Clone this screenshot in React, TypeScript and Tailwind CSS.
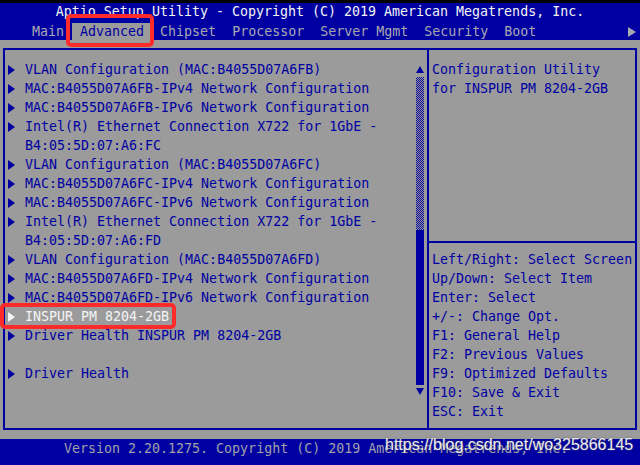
const mono = "font-['DejaVu_Sans_Mono','Liberation_Mono',monospace] text-[13.3px] leading-[19px]";

type Item = { text: string; arrow?: boolean; selected?: boolean };

const items: Item[] = [
  { text: 'VLAN Configuration (MAC:B4055D07A6FB)', arrow: true },
  { text: 'MAC:B4055D07A6FB-IPv4 Network Configuration', arrow: true },
  { text: 'MAC:B4055D07A6FB-IPv6 Network Configuration', arrow: true },
  { text: 'Intel(R) Ethernet Connection X722 for 1GbE -', arrow: true },
  { text: 'B4:05:5D:07:A6:FC' },
  { text: 'VLAN Configuration (MAC:B4055D07A6FC)', arrow: true },
  { text: 'MAC:B4055D07A6FC-IPv4 Network Configuration', arrow: true },
  { text: 'MAC:B4055D07A6FC-IPv6 Network Configuration', arrow: true },
  { text: 'Intel(R) Ethernet Connection X722 for 1GbE -', arrow: true },
  { text: 'B4:05:5D:07:A6:FD' },
  { text: 'VLAN Configuration (MAC:B4055D07A6FD)', arrow: true },
  { text: 'MAC:B4055D07A6FD-IPv4 Network Configuration', arrow: true },
  { text: 'MAC:B4055D07A6FD-IPv6 Network Configuration', arrow: true },
  { text: 'INSPUR PM 8204-2GB', arrow: true, selected: true },
  { text: 'Driver Health INSPUR PM 8204-2GB', arrow: true },
  { text: '' },
  { text: 'Driver Health', arrow: true },
];

const tabs = ['Main', 'Advanced', 'Chipset', 'Processor', 'Server Mgmt', 'Security', 'Boot'];

const help = [
  'Left/Right: Select Screen',
  'Up/Down: Select Item',
  'Enter: Select',
  '+/-: Change Opt.',
  'F1: General Help',
  'F2: Previous Values',
  'F9: Optimized Defaults',
  'F10: Save & Exit',
  'ESC: Exit',
];

const Arrow = ({ white }: { white?: boolean }) => (
  <svg width="7" height="10" viewBox="0 0 7 10" className={white ? 'fill-[#f4f4f4]' : 'fill-[#0000a2]'}>
    <path d="M0 0L7 5L0 10Z" />
  </svg>
);

export default function App() {
  return (
    <div className={`relative flex h-[465px] w-[640px] flex-col overflow-hidden bg-[#9b9b9b] ${mono}`}>
      {/* header */}
      <div className="h-[3px] bg-black" />
      <div className="flex h-[37px] flex-col bg-[#0000a2]">
        <div className="h-[19px] text-center leading-[18px] text-[#f4f4f4]">
          Aptio Setup Utility - Copyright (C) 2019 American Megatrends, Inc.
        </div>
        <div className="flex h-[18px] items-end pl-[24px] text-[#a8a8b0]">
          {tabs.map((t) => (
            <span
              key={t}
              className={
                t === 'Advanced'
                  ? 'h-[17px] whitespace-pre bg-[#9b9b9b] px-[8px] leading-[17px] text-[#0000a2]'
                  : 'h-[17px] whitespace-pre px-[8px] leading-[17px]'
              }
            >
              {t}
            </span>
          ))}
          <span className="ml-auto mr-[4px] flex h-[17px] items-center">
            <svg width="8" height="10" viewBox="0 0 8 10" className="fill-[#a8a8b0]">
              <path d="M0 0L8 5L0 10Z" />
            </svg>
          </span>
        </div>
      </div>

      {/* main box */}
      <div className="mx-[3px] mt-[8px] flex h-[382px] border-2 border-[#0000a2] text-[#0000a2]">
        <div className="flex w-[422px]">
          <div className="flex-1 pl-[3px] pt-[10px]">
            {items.map((it, i) => (
              <div key={i} className="flex h-[19px] items-center whitespace-pre">
                <span className="flex w-[17px] items-center">{it.arrow && <Arrow white={it.selected} />}</span>
                <span className={it.selected ? 'text-[#f4f4f4]' : ''}>{it.text}</span>
              </div>
            ))}
          </div>
          <div className="mr-[3px] flex w-[8px] flex-col items-center pt-[16px]">
            <svg width="8" height="7" viewBox="0 0 8 7" className="fill-[#0000a2]">
              <path d="M4 0L8 7L0 7Z" />
            </svg>
            <div className="mt-[4px] h-[153px] w-[8px] bg-[repeating-conic-gradient(#0000a2_0_25%,transparent_0_50%)] bg-[length:2px_2px]" />
            <div className="h-[155px] w-[8px] bg-[#0000a2]" />
            <svg width="8" height="7" viewBox="0 0 8 7" className="mt-[3px] fill-[#0000a2]">
              <path d="M0 0L8 0L4 7Z" />
            </svg>
          </div>
        </div>
        <div className="w-[2px] bg-[#0000a2]" />
        <div className="flex flex-1 flex-col">
          <div className="h-[191px] pl-[3px] pt-[10px]">
            <div>Configuration Utility</div>
            <div>for INSPUR PM 8204-2GB</div>
          </div>
          <div className="h-[2px] bg-[#0000a2]" />
          <div className="pl-[3px] pt-[7px]">
            {help.map((h) => (
              <div key={h} className="whitespace-pre">
                {h}
              </div>
            ))}
          </div>
        </div>
      </div>

      {/* footer */}
      <div className="mt-auto h-[26px] bg-[#0000a2] pl-[64px] leading-[20px] text-[#a0a0a8]">
        Version 2.20.1275. Copyright (C) 2019 American Megatrends, Inc.
      </div>

      {/* annotations */}
      <div className="absolute left-[66px] top-[14px] h-[33px] w-[88px] rounded-[5px] border-4 border-[#ff2a2a]" />
      <div className="absolute left-0 top-[303px] h-[26px] w-[176px] rounded-[5px] border-4 border-[#ff2a2a]" />
      <div className="absolute left-[385px] top-[436px] font-['Liberation_Sans',Arial,sans-serif] text-[16px] leading-[18px] text-[#ececf4] [text-shadow:0_0_2px_#555]">
        https://blog.csdn.net/wo325866145
      </div>
    </div>
  );
}
